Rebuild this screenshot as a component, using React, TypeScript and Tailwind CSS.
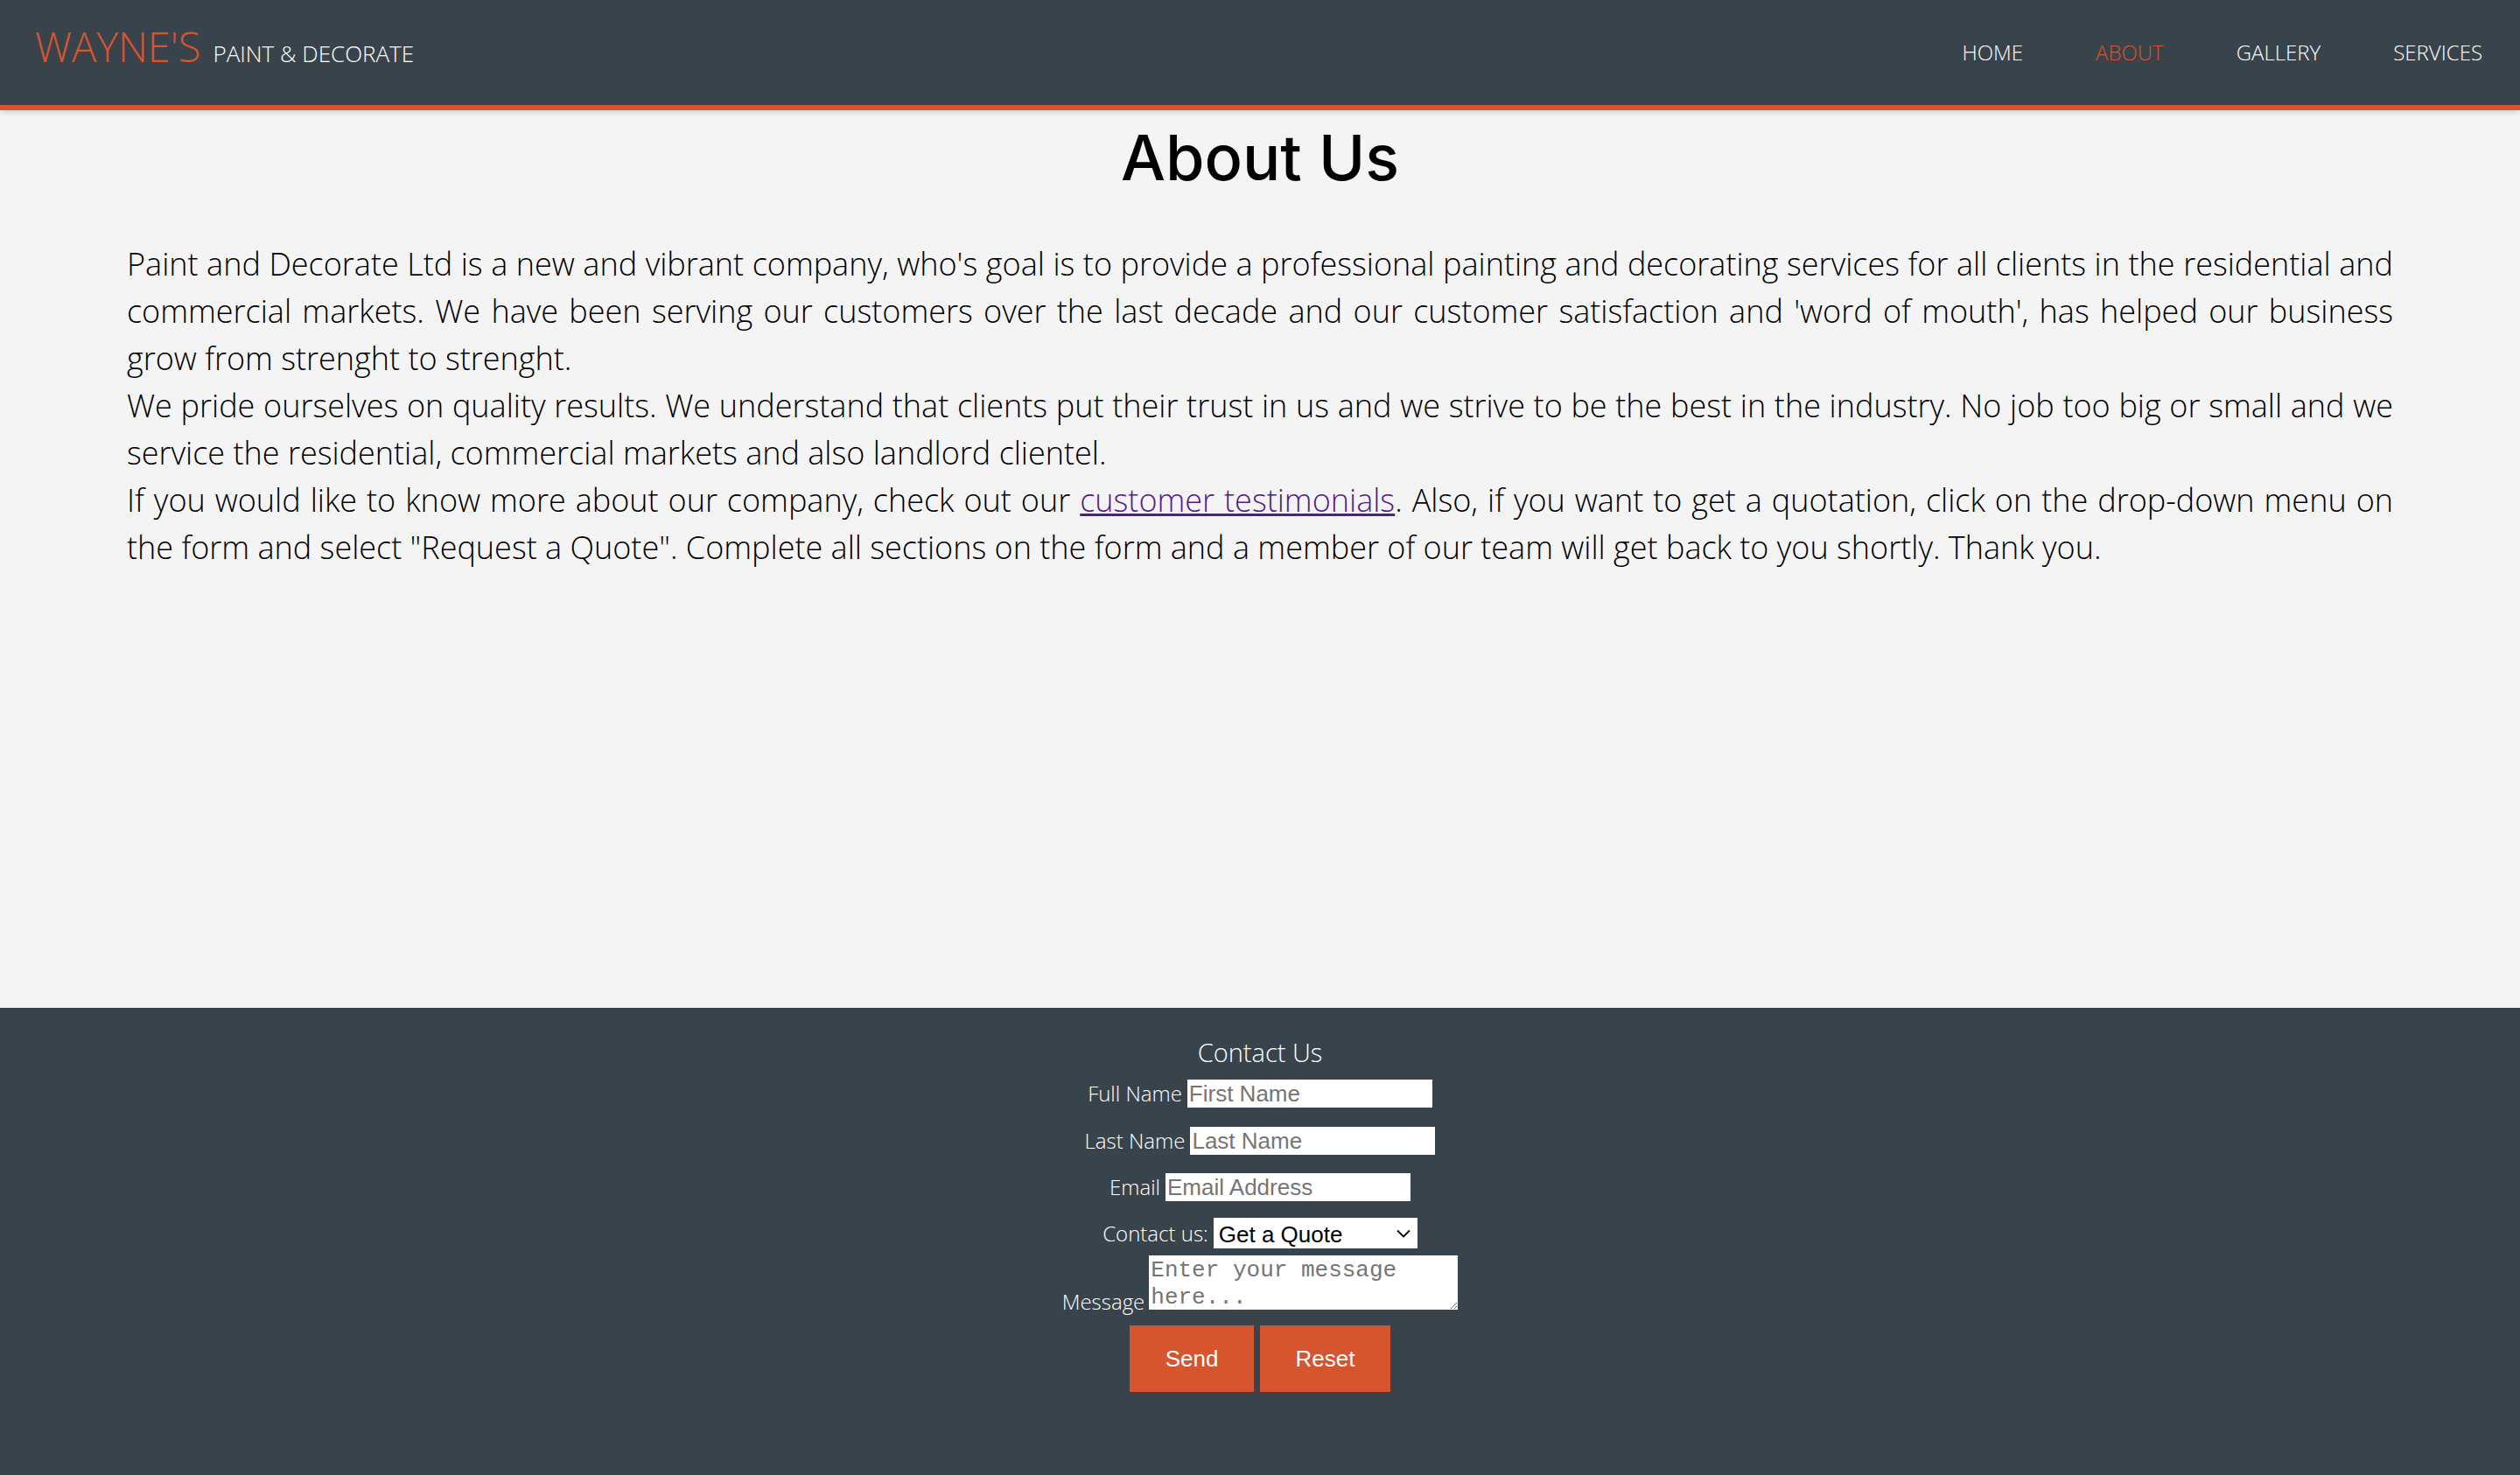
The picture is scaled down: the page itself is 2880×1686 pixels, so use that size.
import { useState } from "react"

const navItems = ["HOME", "ABOUT", "GALLERY", "SERVICES"]

function Header() {
    return (
        <header className="relative z-10 h-[126px] bg-[#39434b] border-b-[6px] border-[#d6552f] shadow-[0_2px_6px_rgba(0,0,0,0.18)] flex justify-between items-start font-['Open_Sans',sans-serif] font-light">
            <div className="flex items-baseline pl-[40px] mt-[30px] leading-none">
                <span className="text-[47px] text-[#d6552f]">WAYNE'S</span>
                <span className="text-[26px] text-white ml-[14px]">PAINT &amp; DECORATE</span>
            </div>
            <nav className="flex gap-[83px] pr-[43px] mt-[48px] leading-none">
                {navItems.map((item) => (
                    <a
                        key={item}
                        href="#"
                        className={item === "ABOUT" ? "text-[24px] text-[#d6552f]" : "text-[24px] text-white"}
                    >
                        {item}
                    </a>
                ))}
            </nav>
        </header>
    )
}

function ContactForm() {
    const [reason, setReason] = useState("quote")
    const fieldCls =
        "w-[280px] h-[32px] bg-white border-0 outline-none px-[2px] py-[1px] text-[26px] text-black font-['Liberation_Sans',Arial,sans-serif] placeholder:text-[#757575]"

    return (
        <footer className="bg-[#39434b] pt-[31px] pb-[95px] flex flex-col items-center text-white font-['Open_Sans',sans-serif] font-light">
            <h2 className="text-[29px] leading-[40px]">Contact Us</h2>

            <div className="mt-[11px] flex items-center gap-[6px]">
                <label className="text-[24px] leading-none">Full Name</label>
                <input className={fieldCls} placeholder="First Name" />
            </div>
            <div className="mt-[22px] flex items-center gap-[6px]">
                <label className="text-[24px] leading-none">Last Name</label>
                <input className={fieldCls} placeholder="Last Name" />
            </div>
            <div className="mt-[21px] flex items-center gap-[6px]">
                <label className="text-[24px] leading-none">Email</label>
                <input className={fieldCls} placeholder="Email Address" />
            </div>
            <div className="mt-[19px] flex items-center gap-[6px]">
                <label className="text-[24px] leading-none">Contact us:</label>
                <div className="relative w-[233px] h-[35px] bg-white">
                    <select
                        value={reason}
                        onChange={(e) => setReason(e.target.value)}
                        className="appearance-none w-full h-full bg-white border-0 outline-none pl-[6px] text-[26px] text-black font-['Liberation_Sans',Arial,sans-serif]"
                    >
                        <option value="quote">Get a Quote</option>
                        <option value="question">Ask a Question</option>
                        <option value="other">Other</option>
                    </select>
                    <svg className="absolute right-[8px] top-[13px] pointer-events-none" width="16" height="10" viewBox="0 0 16 10" fill="none">
                        <path d="M1 1.5 L8 8.5 L15 1.5" stroke="#000" strokeWidth="1.8" />
                    </svg>
                </div>
            </div>
            <div className="mt-[8px] flex items-end gap-[5px]">
                <label className="text-[24px] leading-none mb-[-3px]">Message</label>
                <textarea
                    className="block w-[353px] h-[62px] bg-white border-0 outline-none px-[2px] pt-[2px] pb-0 text-[26px] leading-[31px] text-black font-['Liberation_Mono','Courier_New',monospace] placeholder:text-[#757575] resize"
                    placeholder="Enter your message here..."
                />
            </div>
            <div className="mt-[18px] flex gap-[7px] font-['Liberation_Sans',Arial,sans-serif] font-normal">
                <button className="w-[142px] h-[76px] bg-[#d6552f] text-white text-[26px]">Send</button>
                <button className="w-[149px] h-[76px] bg-[#d6552f] text-white text-[26px]">Reset</button>
            </div>
        </footer>
    )
}

export default function App() {
    return (
        <div className="min-h-screen flex flex-col bg-[#f4f4f4]">
            <Header />
            <main className="flex-1 px-[145px]">
                <h1 className="mt-[10px] text-center text-[72px] leading-[87px] font-medium text-black font-['Inter',sans-serif]">
                    About Us
                </h1>
                <div className="mt-[52px] text-[36px] leading-[54px] text-black font-light font-['Open_Sans',sans-serif] text-justify">
                    <p>
                        Paint and Decorate Ltd is a new and vibrant company, who's goal is to provide a professional painting and decorating services for all clients in the residential and commercial markets. We have been serving our customers over the last decade and our customer satisfaction and 'word of mouth', has helped our business grow from strenght to strenght.
                    </p>
                    <p>
                        We pride ourselves on quality results. We understand that clients put their trust in us and we strive to be the best in the industry. No job too big or small and we service the residential, commercial markets and also landlord clientel.
                    </p>
                    <p>
                        If you would like to know more about our company, check out our{" "}
                        <a href="#" className="text-[#551a8b] underline">customer testimonials</a>. Also, if you want to get a quotation, click on the drop-down menu on the form and select "Request a Quote". Complete all sections on the form and a member of our team will get back to you shortly. Thank you.
                    </p>
                </div>
            </main>
            <ContactForm />
        </div>
    )
}
